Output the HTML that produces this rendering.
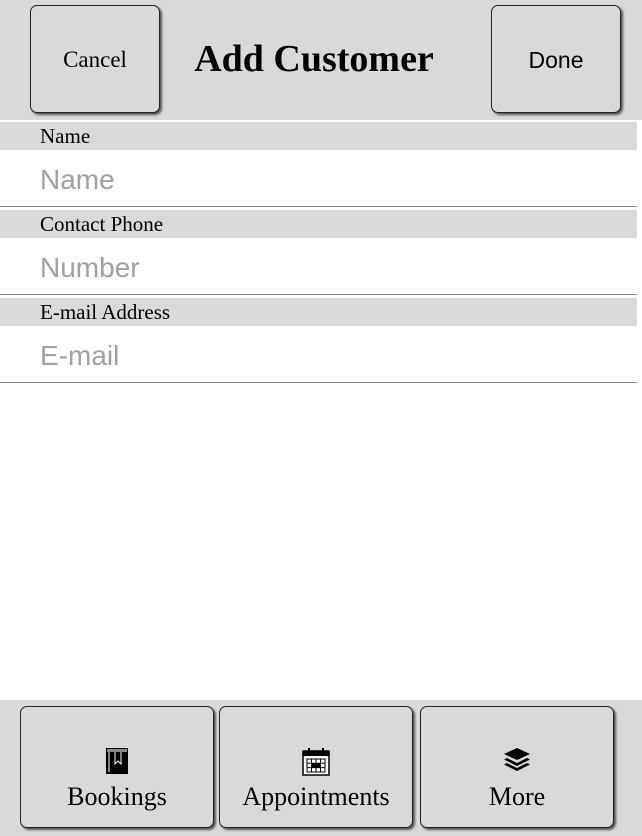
<!DOCTYPE html>
<html><head><style>
body{margin:0;width:642px;height:836px;background:#fff;position:relative;overflow:hidden;font-family:"Liberation Serif",serif}
.hdr{position:absolute;left:0;top:0;width:642px;height:120px;background:#d9d9d9}
.btn{position:absolute;background:#d9d9d9;border:1px solid #222;border-radius:7px;box-shadow:2px 2px 2px #555;box-sizing:border-box;display:flex;align-items:center;justify-content:center;flex-direction:column}
.title{position:absolute;left:160px;width:308px;top:37px;text-align:center;font-weight:bold;font-size:38px}
.lab{position:absolute;left:0;width:637px;height:28px;background:#d9d9d9;font-size:21px;line-height:28px;padding-left:40px;box-sizing:border-box}
.inp{position:absolute;left:0;width:637px;height:57px;border-bottom:1px solid #888;box-sizing:border-box;font-family:"Liberation Sans",sans-serif;font-size:28px;color:#a0a0a0;padding-left:40px;line-height:59px}
.bar{position:absolute;left:0;top:700px;width:642px;height:136px;background:#d9d9d9}
.bb{font-size:26px;top:706px;height:122px;width:194px;padding-top:26px}
</style></head><body>
<div class="hdr"></div>
<div class="btn" style="left:30px;top:5px;width:130px;height:108px;font-size:23px;padding-top:2px">Cancel</div>
<div class="title">Add Customer</div>
<div class="btn" style="left:491px;top:5px;width:130px;height:108px;font-size:23px;font-family:'Liberation Sans',sans-serif;padding-top:2px">Done</div>
<div class="lab" style="top:122px">Name</div>
<div class="inp" style="top:150px">Name</div>
<div class="lab" style="top:210px">Contact Phone</div>
<div class="inp" style="top:238px">Number</div>
<div class="lab" style="top:298px">E-mail Address</div>
<div class="inp" style="top:326px">E-mail</div>
<div class="bar"></div>
<div class="btn bb" style="left:20px">
<svg width="22" height="26" viewBox="0 0 22 26"><rect x="0" y="0" width="22" height="26" fill="#000"/><rect x="1" y="1" width="20" height="3" fill="#888"/><path d="M9 4v12l3-3 3 3V4" fill="none" stroke="#fff" stroke-width="1"/><line x1="3" y1="4" x2="3" y2="24" stroke="#fff" stroke-width="1"/></svg>
<div style="margin-top:8px">Bookings</div></div>
<div class="btn bb" style="left:219px">
<svg width="28" height="28" viewBox="0 0 28 28"><rect x="1" y="3" width="26" height="24" fill="#fff" stroke="#000" stroke-width="1.5"/><rect x="1" y="3" width="26" height="5" fill="#000"/><rect x="6" y="0" width="2" height="6" fill="#000"/><rect x="20" y="0" width="2" height="6" fill="#000"/><path d="M5 11h18v13H5zM5 15.3h18M5 19.6h18M9.5 11v13M14 11v13M18.5 11v13" fill="none" stroke="#000" stroke-width="1"/><rect x="9.5" y="15.3" width="9" height="4.3" fill="#000"/></svg>
<div style="margin-top:6px">Appointments</div></div>
<div class="btn bb" style="left:420px">
<svg width="28" height="24" viewBox="0 0 28 24"><path d="M14 0L27 6 14 12 1 6z" fill="#000"/><path d="M4 10l10 5 10-5 3 1.5-13 6.5-13-6.5z" fill="#000"/><path d="M4 15l10 5 10-5 3 1.5-13 6.5-13-6.5z" fill="#000"/></svg>
<div style="margin-top:10px">More</div></div>
</body></html>
